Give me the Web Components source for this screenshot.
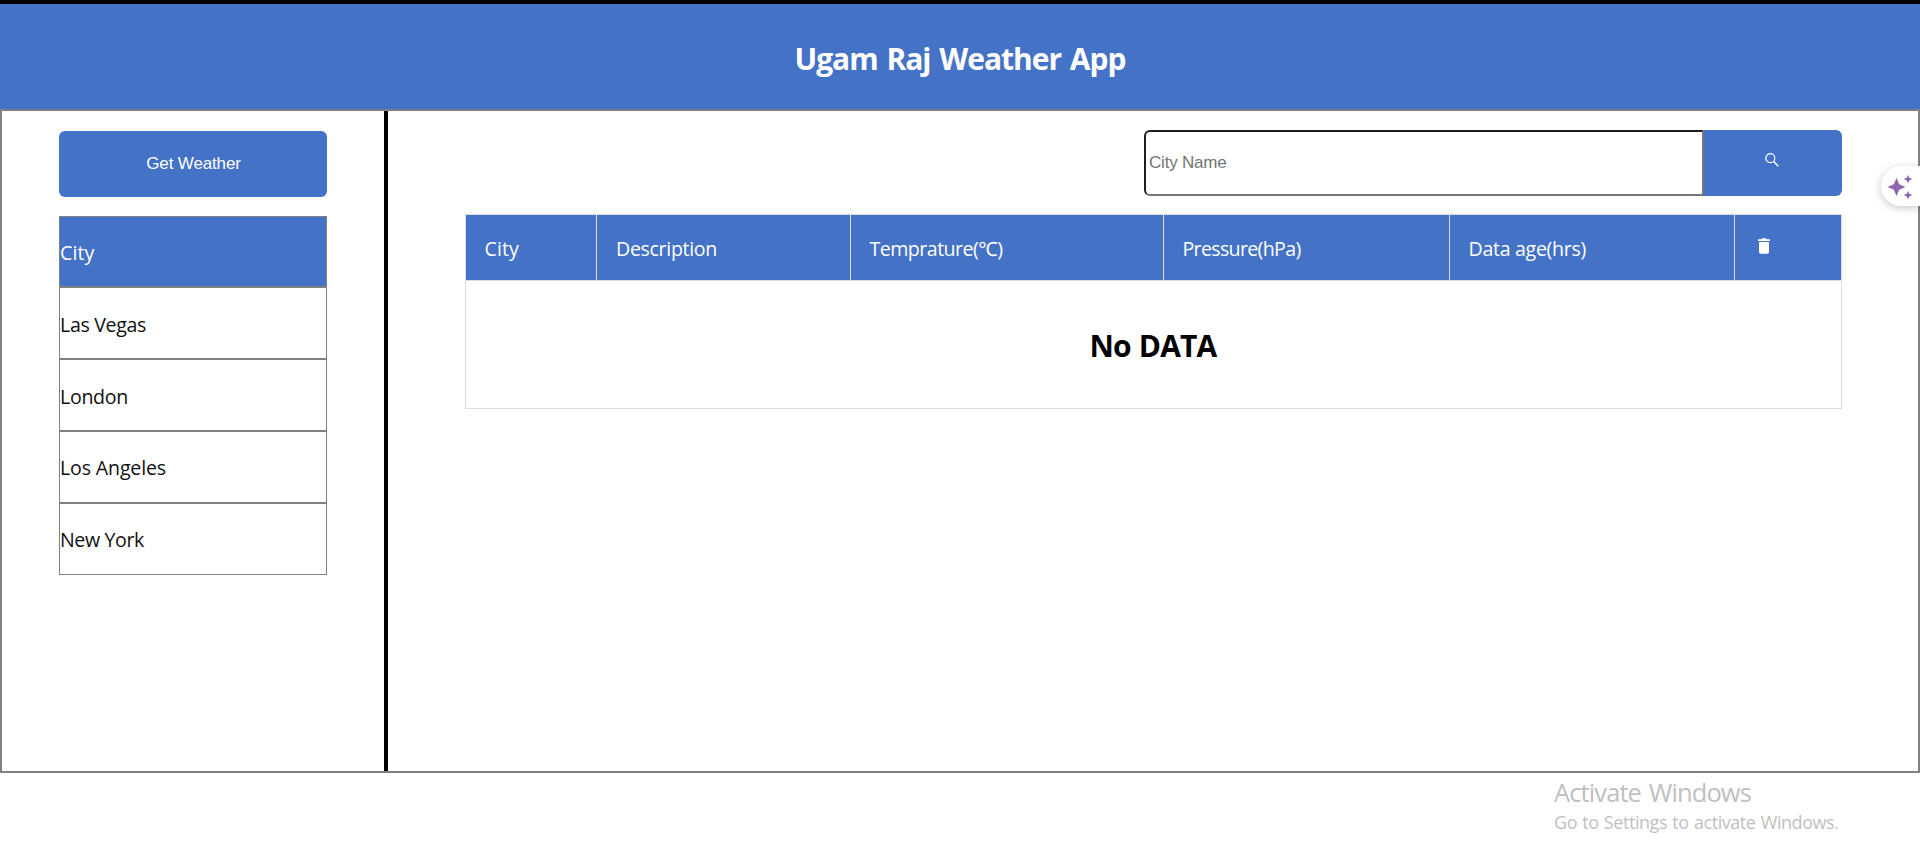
<!DOCTYPE html>
<html lang="en">
<head>
<meta charset="utf-8">
<title>Ugam Raj Weather App</title>
<style>
html, body { margin: 0; height: 100%; overflow: hidden; background: #fff; }
body { font-family: "Segoe UI", "Open Sans", "Noto Sans", "Noto Sans CJK SC", sans-serif; }
</style>
</head>
<body>
<weather-app></weather-app>
<script>
const define = (name, html, init) => {
  const template = document.createElement('template');
  template.innerHTML = html;
  customElements.define(name, class extends HTMLElement {
    constructor() {
      super();
      this.attachShadow({ mode: 'open' }).append(template.content.cloneNode(true));
    }
    connectedCallback() { if (init) init(this); }
  });
};

/* Label whose tracking is adjusted so that it spans a given width. */
define('fit-label', `
<style>:host{display:inline-block;white-space:nowrap} span{display:inline-block}</style>
<span><slot></slot></span>`, el => {
  const span = el.shadowRoot.querySelector('span');
  const target = parseFloat(el.getAttribute('width'));
  const natural = span.getBoundingClientRect().width;
  const n = el.textContent.length;
  if (n && natural) span.style.letterSpacing = ((target - natural) / n).toFixed(3) + 'px';
});

define('app-header', `
<style>
:host{display:flex;box-sizing:border-box;height:109px;border-top:4px solid #000;background:#4472c7;align-items:center;justify-content:center}
h1{margin:0;padding-top:4px;font-size:30px;line-height:40px;color:#fff;font-weight:700;word-spacing:2px}
</style>
<h1><slot></slot></h1>`);

define('get-button', `
<style>
:host{display:block}
button{display:block;width:100%;height:66px;border:0;border-radius:6px;padding:0 0 0 1px;background:#4472c7;color:#fff;font:17px/20px "Liberation Sans",Arial,sans-serif}
</style>
<button><slot></slot></button>`);

define('city-row', `
<style>
:host{display:flex;box-sizing:border-box;height:72px;border:1px solid #808080;align-items:center;padding:4px 0 0 0;font-size:19.6px;line-height:28px;color:#111}
:host([tight]){padding-top:2px}
:host([head]){height:71px;padding-top:3px;background:#4472c7;color:#fff}
</style>
<slot></slot>`);

define('city-sidebar', `
<style>
:host{display:block;box-sizing:border-box;width:386px;border-right:4px solid #000;padding:20px 57px 0}
.list{margin-top:19px}
</style>
<get-button><fit-label width="94.5">Get Weather</fit-label></get-button>
<div class="list">
<city-row head><fit-label width="34.5">City</fit-label></city-row>
<city-row><fit-label width="86">Las Vegas</fit-label></city-row>
<city-row><fit-label width="68">London</fit-label></city-row>
<city-row tight><fit-label width="106">Los Angeles</fit-label></city-row>
<city-row tight><fit-label width="84">New York</fit-label></city-row>
</div>`);

define('search-bar', `
<style>
:host{display:flex;height:66px;width:698px;margin-left:auto}
.field{box-sizing:border-box;width:560px;border:2px solid;border-color:#1f1f1f #767676 #767676 #1f1f1f;border-radius:6px 0 0 6px;display:flex;align-items:center;padding-left:3px;color:#757575;font:17px/20px "Liberation Sans",Arial,sans-serif}
button{width:138px;border:0;border-radius:0 6px 6px 0;background:#4472c7;padding:0 2px 6px 0;display:flex;align-items:center;justify-content:center}
svg{display:block}
</style>
<div class="field"><fit-label width="77.5">City Name</fit-label></div>
<button aria-label="Search"><svg width="14" height="14" viewBox="0 0 14 14" fill="none" stroke="#fff"><circle cx="5.3" cy="5.2" r="4.5" stroke-width="1.2"/><path d="M8.6 8.5 13.3 13.2" stroke-width="1.5"/></svg></button>`);

define('weather-table', `
<style>
:host{display:block;box-sizing:border-box;border:1px solid #dcdcdc}
.head{display:grid;grid-template-columns:131px 254px 313px 286px 285px 1fr;height:65px;background:#4472c7;border-bottom:1px solid #dcdcdc;color:#fff;font-size:19.6px;line-height:28px}
.head>div{box-sizing:border-box;padding:3px 0 0 18.5px;display:flex;align-items:center;border-right:1px solid #dcdcdc}
.head>div:nth-child(2){padding-left:19px}
.head>div:last-child{border:0;padding:0 0 3px 22px}
.empty{height:127px;display:flex;align-items:center;justify-content:center;padding:2px 1px 0 0;box-sizing:border-box}
h2{margin:0;font-size:30px;line-height:40px;color:#000;word-spacing:1px}
svg{display:block}
</style>
<div class="head">
<div><fit-label width="34.5">City</fit-label></div>
<div><fit-label width="101">Description</fit-label></div>
<div><fit-label width="133">Temprature(℃)</fit-label></div>
<div><fit-label width="118">Pressure(hPa)</fit-label></div>
<div><fit-label width="117.500">Data age(hrs)</fit-label></div>
<div><svg width="14" height="16" viewBox="0 0 14 16" fill="#fff"><path d="M1 1.2h3.3L5 .3h4l.7.9H13v1.9H1zM2 4h10v10q0 1.7-1.7 1.7H3.7Q2 15.700 2 14z"/></svg></div>
</div>
<div class="empty"><h2><fit-label width="127">No DATA</fit-label></h2></div>`);

define('assist-tab', `
<style>
:host{position:absolute;right:0;top:166px;width:39px;height:40px;border-radius:20px 0 0 20px;background:#fff;box-shadow:0 2px 8px rgba(0,0,0,.22)}
svg{display:block}
</style>
<svg width="39" height="40" viewBox="0 0 39 40" fill="#8f65ae"><path d="M15.500 12 18.200 18.300 24.500 21 18.200 23.700 15.500 30 12.800 23.700 6.500 21 12.800 18.300zM27 9l1.300 2.800 2.900 1.300-2.900 1.300L27 17.200l-1.300-2.800-2.900-1.300 2.900-1.300zM27 25l1.300 2.800 2.900 1.300-2.900 1.300L27 33.200l-1.300-2.800-2.900-1.300 2.900-1.300z"/></svg>`);

define('activation-note', `
<style>
:host{display:block;padding:3px 0 0 1554px;color:#bfbfbf}
div{height:32px;line-height:32px;font-size:25.500px;word-spacing:2px}
div+div{height:24px;line-height:24px;font-size:18px;margin-top:2px;word-spacing:1px}
</style>
<div><fit-label width="197">Activate Windows</fit-label></div>
<div><fit-label width="284.500">Go to Settings to activate Windows.</fit-label></div>`);

define('weather-app', `
<style>
:host{display:block;position:relative;height:857px;overflow:hidden}
.body{box-sizing:border-box;height:664px;border:2px solid #808080;display:flex}
main{flex:1;padding:19px 76px 0 77px}
weather-table{margin-top:18px}
</style>
<app-header><fit-label width="331">Ugam Raj Weather App</fit-label></app-header>
<div class="body">
<city-sidebar></city-sidebar>
<main><search-bar></search-bar><weather-table></weather-table></main>
</div>
<activation-note></activation-note>
<assist-tab></assist-tab>`);
</script>
</body>
</html>
